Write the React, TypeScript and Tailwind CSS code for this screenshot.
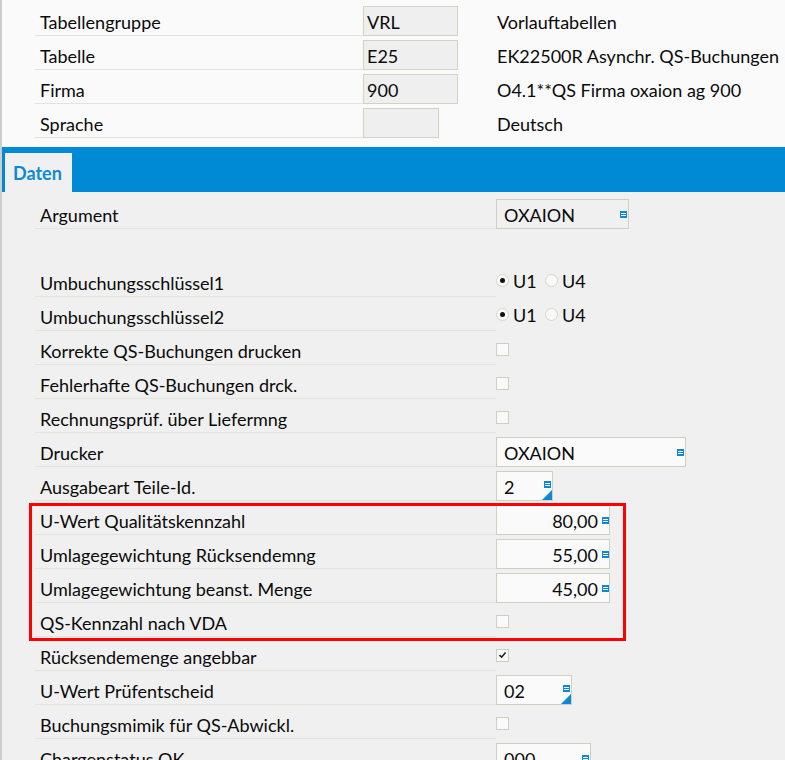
import React from "react";

const ListIcon = () => (
  <svg width="7" height="7" viewBox="0 0 7 7" className="shrink-0 block" shapeRendering="crispEdges">
    <rect x="0" y="0" width="7" height="7" fill="#0a8ad6" />
    <rect x="1" y="2" width="5" height="1" fill="#ffffff" />
    <rect x="1" y="4" width="5" height="1" fill="#ffffff" />
  </svg>
);

const Corner = () => (
  <svg width="10" height="10" viewBox="0 0 10 10" className="absolute right-0 bottom-0 block">
    <polygon points="10,0 10,10 0,10" fill="#0a8ad6" />
  </svg>
);

function HeaderRow({ label, value, desc, short }: { label: string; value: string; desc: string; short?: boolean }) {
  return (
    <div className="flex h-[34px]">
      <div className="ml-[33px] w-[328px] flex items-end pl-[5px] pb-[3px] border-b border-[#e3e3dc] leading-[20px]">
        {label}
      </div>
      <div className="w-[134px] flex items-end">
        <div
          className={
            (short ? "w-[76px] " : "w-[95px] ") +
            "h-[30px] bg-[#efefef] border border-[#d3d3c3] flex items-center pl-[3px] pt-[2px] leading-[20px]"
          }
        >
          {value}
        </div>
      </div>
      <div className="flex items-end pb-[4px] leading-[20px] whitespace-nowrap">{desc}</div>
    </div>
  );
}

function Row({ label, children, align = "end", line = true }: { label: string; children?: React.ReactNode; align?: "end" | "center"; line?: boolean }) {
  return (
    <div className="flex h-[34px]">
      <div
        className={
          "ml-[33px] w-[461px] flex items-end pl-[5px] pb-[3px] leading-[20px] whitespace-nowrap " +
          (line ? "border-b border-[#e3e3dc]" : "")
        }
      >
        {label}
      </div>
      <div className={"flex " + (align === "end" ? "items-end" : "items-center")}>{children}</div>
    </div>
  );
}

const Checkbox = ({ checked }: { checked?: boolean }) => (
  <div className="w-[13px] h-[13px] mt-[2px] border border-[#d0d0c0] bg-[#f9f9f9] flex items-center justify-center">
    {checked && (
      <svg width="9" height="8" viewBox="0 0 9 8" className="block">
        <path d="M1.5 4.2 L3.6 6.2 L7.6 1.6" stroke="#222" strokeWidth="1.6" fill="none" />
      </svg>
    )}
  </div>
);

const Radio = ({ label, checked }: { label: string; checked?: boolean }) => (
  <div className="w-[49px] flex items-center gap-[4px]">
    <div className="w-[13px] h-[13px] rounded-full border border-[#d6d6c8] bg-[#f9f9f9] flex items-center justify-center">
      {checked && <div className="w-[5px] h-[5px] rounded-full bg-[#111]" />}
    </div>
    <span className="leading-[20px] pt-[1px]">{label}</span>
  </div>
);

const TextBox = ({ value, w, bg = "bg-[#fafafa]" }: { value: string; w: string; bg?: string }) => (
  <div className={w + " h-[30px] " + bg + " border border-[#d0d0c0] flex items-center justify-between pl-[7px] pr-[1px] pt-[1px] leading-[20px]"}>
    <span>{value}</span>
    <ListIcon />
  </div>
);

const NumBox = ({ value }: { value: string }) => (
  <div className="w-[114px] h-[30px] bg-[#fafafa] border border-[#d0d0c0] flex items-center justify-end gap-[4px] pr-[0px] pt-[1px] leading-[20px]">
    <span>{value}</span>
    <ListIcon />
  </div>
);

const CodeBox = ({ value, w }: { value: string; w: string }) => (
  <div className={w + " relative h-[30px] bg-[#fafafa] border border-[#d0d0c0] flex items-center justify-between pl-[7px] pr-[1px] leading-[20px]"}>
    <span className="pt-[2px]">{value}</span>
    <div className="mb-[3px]">
      <ListIcon />
    </div>
    <Corner />
  </div>
);

export default function App() {
  return (
    <div
      className="relative w-[785px] h-[760px] overflow-hidden border-l-2 border-[#cdcdcd] bg-[#f0f0f0] text-[18px] text-[#0a0a0a]"
      style={{ fontFamily: "Lato, 'Open Sans', sans-serif" }}
    >
      <div className="bg-[#fafafa] h-[147px] pt-[2px]">
        <HeaderRow label="Tabellengruppe" value="VRL" desc="Vorlauftabellen" />
        <HeaderRow label="Tabelle" value="E25" desc="EK22500R Asynchr. QS-Buchungen" />
        <HeaderRow label="Firma" value="900" desc="O4.1**QS Firma oxaion ag 900" />
        <HeaderRow label="Sprache" value="" desc="Deutsch" short />
      </div>
      <div className="h-[45px] bg-[#008ad6] flex items-end pl-[3px]">
        <div className="w-[67px] h-[39px] bg-[#f0f0f0] pl-[8px] pt-[10px] leading-[20px] font-bold text-[18px] text-[#0a8ad6]">Daten</div>
      </div>
      <div className="pt-[3px]">
        <Row label="Argument">
          <TextBox value="OXAION" w="w-[133px]" bg="bg-[#f0f0f0]" />
        </Row>
        <Row label="" line={false} />
        <Row label="Umbuchungsschlüssel1" align="center">
          <Radio label="U1" checked />
          <Radio label="U4" />
        </Row>
        <Row label="Umbuchungsschlüssel2" align="center">
          <Radio label="U1" checked />
          <Radio label="U4" />
        </Row>
        <Row label="Korrekte QS-Buchungen drucken" align="center">
          <Checkbox />
        </Row>
        <Row label="Fehlerhafte QS-Buchungen drck." align="center">
          <Checkbox />
        </Row>
        <Row label="Rechnungsprüf. über Liefermng" align="center">
          <Checkbox />
        </Row>
        <Row label="Drucker">
          <TextBox value="OXAION" w="w-[190px]" />
        </Row>
        <Row label="Ausgabeart Teile-Id.">
          <CodeBox value="2" w="w-[57px]" />
        </Row>
        <Row label="U-Wert Qualitätskennzahl">
          <NumBox value="80,00" />
        </Row>
        <Row label="Umlagegewichtung Rücksendemng">
          <NumBox value="55,00" />
        </Row>
        <Row label="Umlagegewichtung beanst. Menge">
          <NumBox value="45,00" />
        </Row>
        <Row label="QS-Kennzahl nach VDA" align="center">
          <Checkbox />
        </Row>
        <Row label="Rücksendemenge angebbar" align="center">
          <Checkbox checked />
        </Row>
        <Row label="U-Wert Prüfentscheid">
          <CodeBox value="02" w="w-[76px]" />
        </Row>
        <Row label="Buchungsmimik für QS-Abwickl." align="center">
          <Checkbox />
        </Row>
        <Row label="Chargenstatus OK">
          <TextBox value="000" w="w-[95px]" />
        </Row>
      </div>
      <div className="absolute left-[27px] top-[503px] w-[597px] h-[138px] border-[3px] border-[#ff0000]" />
    </div>
  );
}
